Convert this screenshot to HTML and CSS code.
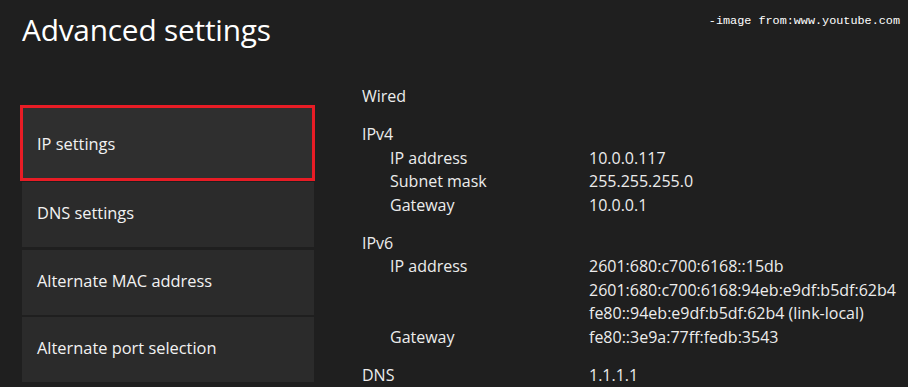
FILE: index.html
```html
<!DOCTYPE html>
<html lang="en">
<head>
	<meta charset="UTF-8">
	<title>Advanced settings</title>
	<link rel="stylesheet" href="styles.css">
</head>
<body>
	<div class="head">
		<h1>Advanced settings</h1>
		<span class="credit">-image from:www.youtube.com</span>
	</div>
	<div class="main">
		<ul class="menu">
			<li class="active">IP settings</li>
			<li>DNS settings</li>
			<li>Alternate MAC address</li>
			<li>Alternate port selection</li>
		</ul>
		<div class="info">
			<div class="line">Wired</div>

			<div class="group">
				<div class="line">IPv4</div>
				<div class="row"><span>IP address</span><span>10.0.0.117</span></div>
				<div class="row"><span>Subnet mask</span><span>255.255.255.0</span></div>
				<div class="row"><span>Gateway</span><span>10.0.0.1</span></div>
			</div>

			<div class="group">
				<div class="line">IPv6</div>
				<div class="row"><span>IP address</span><span>2601:680:c700:6168::15db</span></div>
				<div class="row"><span></span><span>2601:680:c700:6168:94eb:e9df:b5df:62b4</span></div>
				<div class="row"><span></span><span>fe80::94eb:e9df:b5df:62b4 (link-local)</span></div>
				<div class="row"><span>Gateway</span><span>fe80::3e9a:77ff:fedb:3543</span></div>
			</div>

			<div class="group">
				<div class="row dns"><span>DNS</span><span>1.1.1.1</span></div>
			</div>
		</div>
	</div>
</body>
</html>
```

FILE: styles.css
```css
html,
body{
	margin: 0;
	padding: 0;
	background-color: #1f1f1f;
	color: #ececec;
	font-family: "Open Sans", "Noto Sans", sans-serif;
	overflow: hidden;
}
.head{
	display: flex;
	justify-content: space-between;
	align-items: flex-start;
	padding: 0 8px 0 22px;
}
h1{
	margin: 10px 0 0;
	font-size: 29.8px;
	font-weight: 400;
	line-height: 40px;
	color: #fff;
	letter-spacing: -0.2px;
}
.credit{
	margin-top: 14px;
	font-family: "Liberation Mono", monospace;
	font-size: 11.8px;
	color: #fff;
}
.main{
	display: flex;
	margin-top: 35px;
}
.menu{
	list-style: none;
	margin: 20px 0 0 22px;
	padding: 0;
	width: 292px;
	display: flex;
	flex-direction: column;
	gap: 2.5px;
}
.menu li{
	height: 65px;
	line-height: 61px;
	padding-left: 15px;
	background-color: #2b2b2b;
	font-size: 16.4px;
	color: #f2f2f2;
}
.menu li.active{
	position: relative;
	z-index: 1;
	height: 70px;
	line-height: 72px;
	margin: 0 -1px -1.5px -2px;
	padding-left: 14px;
	border: 3px solid #e81c25;
	background-color: #2f2f2f;
}
.info{
	margin-left: 48px;
	font-size: 16px;
}
.line,
.row{
	line-height: 23.5px;
}
.group{
	margin-top: 14.5px;
}
.row{
	display: grid;
	grid-template-columns: 199px auto;
	padding-left: 28px;
}
.row.dns{
	grid-template-columns: 227px auto;
	padding-left: 0;
}
```
